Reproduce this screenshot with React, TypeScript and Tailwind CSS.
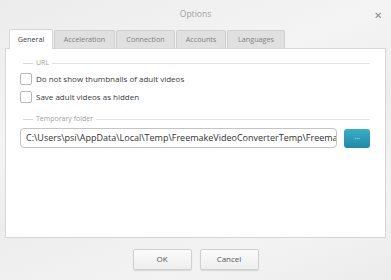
import React from 'react';

const tabs = ['General', 'Acceleration', 'Connection', 'Accounts', 'Languages'];
const tabWidths = ['w-[44px]', 'w-[61px]', 'w-[59px]', 'w-[50px]', 'w-[58px]'];

const Check: React.FC<{ label: string }> = ({ label }) => (
  <label className="flex items-center gap-[4px] h-[18px]">
    <span className="w-[12px] h-[12px] rounded-[2px] border border-[#b8b8b8] bg-white" />
    <span className="text-[8px] text-[#3a3a3a]">{label}</span>
  </label>
);

const Legend: React.FC<{ title: string }> = ({ title }) => (
  <div className="flex items-center gap-[3px] h-[12px]">
    <div className="w-[10px] h-px bg-[#d8d8d8]" />
    <span className="text-[7px] text-[#a0a0a0]">{title}</span>
    <div className="flex-1 h-px bg-[#e4e4e4]" />
  </div>
);

export default function App() {
  return (
    <div
      className="w-[391px] h-[280px] flex flex-col bg-[linear-gradient(160deg,#ececec_0%,#f4f4f4_35%,#ededed_55%,#f3f3f3_80%,#ececec_100%)]"
      style={{ fontFamily: '"Open Sans", "Noto Sans", sans-serif' }}
    >
      <div className="h-[29px] flex items-center justify-center relative">
        <span className="text-[8.5px] text-[#a0a0a0]">Options</span>
        <span className="absolute right-[9px] top-[10px] text-[10px] text-[#8a8a8a] leading-none">✕</span>
      </div>

      <div className="flex pl-[9px] h-[19px] items-end gap-[1px]">
        {tabs.map((t, i) =>
          i === 0 ? (
            <div
              key={t}
              className={`${tabWidths[i]} h-[20px] -mb-px z-10 bg-white border border-b-0 border-[#d6d6d6] rounded-t-[2px] flex items-center justify-center text-[7.2px] text-[#444]`}
            >
              {t}
            </div>
          ) : (
            <div
              key={t}
              className={`${tabWidths[i]} h-[18px] bg-[#e0e0e0] border border-b-0 border-[#cfcfcf] rounded-t-[2px] flex items-center justify-center text-[7.2px] text-[#808080]`}
            >
              {t}
            </div>
          )
        )}
      </div>

      <div className="mx-[5px] h-[190px] bg-white border border-[#d6d6d6] pt-[8px] pl-[14px] pr-[15px]">
        <div className="pl-[3px]">
          <Legend title="URL" />
        </div>
        <div className="mt-[1px] flex flex-col">
          <Check label="Do not show thumbnails of adult videos" />
          <Check label="Save adult videos as hidden" />
        </div>
        <div className="mt-[7px] pl-[3px]">
          <Legend title="Temporary folder" />
        </div>
        <div className="mt-[3px] flex items-center gap-[7px]">
          <div className="w-[320px] h-[20px] rounded-[4px] border border-[#c4c4c4] overflow-hidden flex items-center pl-[5px]">
            <span className="text-[9px] text-[#333] whitespace-nowrap">
              C:\Users\psi\AppData\Local\Temp\FreemakeVideoConverterTemp\Freema
            </span>
          </div>
          <div className="w-[26px] h-[19px] rounded-[3px] bg-[linear-gradient(#39aec9,#1e8ba6)] flex items-center justify-center text-[7px] text-[#d8f2f8] leading-none pb-[3px]">
            ...
          </div>
        </div>
      </div>

      <div className="flex-1 flex items-center justify-center gap-[8px]">
        <div className="w-[59px] h-[21px] bg-[linear-gradient(#fbfbfb,#eeeeee)] border border-[#d0d0d0] rounded-[2px] shadow-[0_1px_1px_rgba(0,0,0,0.12)] flex items-center justify-center text-[8px] text-[#555]">
          OK
        </div>
        <div className="w-[59px] h-[21px] bg-[linear-gradient(#fbfbfb,#eeeeee)] border border-[#d0d0d0] rounded-[2px] shadow-[0_1px_1px_rgba(0,0,0,0.12)] flex items-center justify-center text-[8px] text-[#555]">
          Cancel
        </div>
      </div>
    </div>
  );
}
